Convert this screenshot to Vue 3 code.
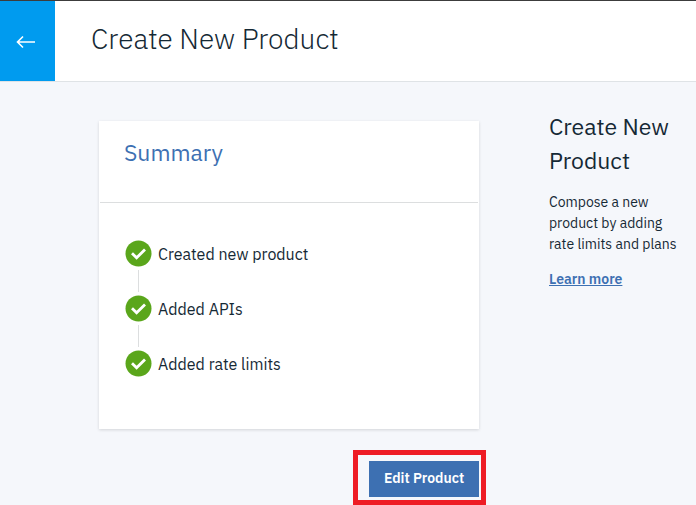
<script setup>
const steps = ['Created new product', 'Added APIs', 'Added rate limits']
</script>

<template>
  <div class="page">
    <header class="header">
      <button class="back" type="button" aria-label="Back">
        <svg width="20" height="14" viewBox="0 0 20 14" fill="none" stroke="#fff" stroke-width="1.6" aria-hidden="true">
          <path d="M19 7H2M7 1.5L1.5 7 7 12.5" />
        </svg>
      </button>
      <h1 class="title">Create New Product</h1>
    </header>

    <div class="content">
      <main class="main">
        <section class="card">
          <h2 class="card-title">Summary</h2>
          <ol class="steps">
            <li v-for="step in steps" :key="step" class="step">
              <svg class="check" width="28" height="28" viewBox="0 0 28 28" fill="none" aria-hidden="true">
                <circle cx="14.5" cy="13.5" r="13" fill="#5aa61b" />
                <path d="M8 13.2l4.6 4.6 8.4-8.3" stroke="#fff" stroke-width="2.8" />
              </svg>
              <span>{{ step }}</span>
            </li>
          </ol>
        </section>
        <div class="actions">
          <div class="highlight">
            <button class="edit" type="button">Edit Product</button>
          </div>
        </div>
      </main>

      <aside class="help">
        <h2 class="help-title">Create New Product</h2>
        <p class="help-text">Compose a new product by adding rate limits and plans</p>
        <a class="learn" href="#">Learn more</a>
      </aside>
    </div>
  </div>
</template>

<style>
body {
  background: #f5f7fb;
}
</style>

<style scoped>
.page {
  font-family: "IBM Plex Sans", Roboto, "Liberation Sans", sans-serif;
  color: #152935;
}
h1,
h2,
p,
ol {
  margin: 0;
  padding: 0;
}
.header {
  display: flex;
  background: #fff;
  border-top: 1px solid #3c3c3c;
  border-bottom: 1px solid #dfe3e6;
}
.back {
  display: flex;
  align-items: center;
  justify-content: center;
  width: 55px;
  height: 80px;
  padding: 2px 4px 0 0;
  border: 0;
  background: #009bef;
}
.title {
  padding: 18px 0 0 36px;
  font-size: 28px;
  line-height: 40px;
  font-weight: 300;
}
.content {
  display: grid;
  grid-template-columns: minmax(0, 1fr) 131px;
  gap: 70px;
  padding: 27px 16px 0 99px;
}
.main {
  padding-top: 12px;
}
.card {
  background: #fff;
  box-shadow: 0 1px 3px rgba(0, 0, 0, 0.14);
}
.card-title {
  margin: 0 1px;
  padding: 15px 24px 34px;
  border-bottom: 1px solid #dcdedf;
  color: #3d70b2;
  font-size: 23px;
  line-height: 32px;
  font-weight: 400;
}
.steps {
  display: flex;
  flex-direction: column;
  gap: 27px;
  padding: 37px 25px 51px;
  list-style: none;
}
.step {
  position: relative;
  display: flex;
  align-items: center;
  gap: 6px;
  font-size: 16px;
  line-height: 28px;
}
.check {
  flex: none;
}
.step + .step::before {
  content: "";
  position: absolute;
  left: 14px;
  top: -25px;
  width: 1px;
  height: 22px;
  background: #dcdedf;
}
.actions {
  display: flex;
  justify-content: flex-end;
  margin: 21px -7px 0 0;
}
.highlight {
  padding: 6px 2px 3px 11px;
  border: 5px solid #ee1c25;
}
.edit {
  display: block;
  width: 110px;
  height: 36px;
  padding: 0 0 2px;
  border: 0;
  background: #3d70b2;
  color: #fff;
  font-family: inherit;
  font-size: 14px;
  font-weight: 600;
}
.help-title {
  font-size: 23px;
  line-height: 34px;
  font-weight: 400;
}
.help-text {
  margin: 15px 0 13px;
  font-size: 14px;
  line-height: 21px;
}
.learn {
  color: #3d70b2;
  font-size: 14px;
  line-height: 21px;
  font-weight: 600;
}
</style>
